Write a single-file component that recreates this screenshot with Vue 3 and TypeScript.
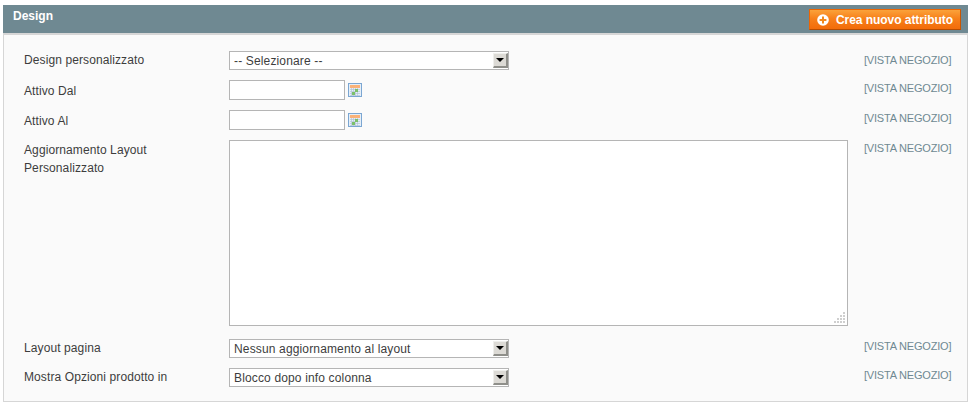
<script setup lang="ts">
interface SelectRow {
  label: string;
  value: string;
}

const customDesign: SelectRow = { label: 'Design personalizzato', value: '-- Selezionare --' };
const dateRows = ['Attivo Dal', 'Attivo Al'];
const bottomRows: SelectRow[] = [
  { label: 'Layout pagina', value: 'Nessun aggiornamento al layout' },
  { label: 'Mostra Opzioni prodotto in', value: 'Blocco dopo info colonna' },
];
const scope = '[VISTA NEGOZIO]';

// dotted grip in the textarea corner: [x, y]
const gripDots = [
  [9, 0], [9, 3], [9, 6], [9, 9],
  [6, 3], [6, 6], [6, 9],
  [3, 6], [3, 9],
  [0, 9],
];
</script>

<template>
  <div class="page">
    <div class="head">
      <h4 class="head-title">Design</h4>
      <button class="add-btn" type="button">
        <svg class="add-icon" width="12" height="12" viewBox="0 0 12 12">
          <circle cx="6" cy="6" r="5.8" fill="#fff" />
          <path d="M6 2.6v6.8M2.6 6h6.8" stroke="#f28a1c" stroke-width="2" />
        </svg>
        <span>Crea nuovo attributo</span>
      </button>
    </div>

    <div class="fieldset">
      <div class="row row-select row-top">
        <label class="label">{{ customDesign.label }}</label>
        <div class="value">
          <div class="select-wrap">
            <select class="select"><option>{{ customDesign.value }}</option></select>
            <span class="select-arrow"><i /></span>
          </div>
        </div>
        <span class="scope">{{ scope }}</span>
      </div>

      <div v-for="name in dateRows" :key="name" class="row row-date">
        <label class="label">{{ name }}</label>
        <div class="value date-value">
          <input class="input" type="text" />
          <svg class="cal" width="14" height="14" viewBox="0 0 14 14">
            <rect x="0.5" y="0.5" width="13" height="13" fill="#e6eff8" stroke="#7ba6d2" />
            <rect x="2" y="2" width="10" height="3" fill="#f9b27a" />
            <path d="M2 6.5h10M2 8.5h10M2 10.5h10M2 12.5h10M3.5 5v8M5.5 5v8M7.5 5v8M9.5 5v8" stroke="#b4c6d8" stroke-width="0.7" />
            <rect x="4" y="9" width="3" height="3" fill="#7cc06a" />
            <rect x="7" y="6" width="3" height="3" fill="#7cc06a" />
          </svg>
        </div>
        <span class="scope">{{ scope }}</span>
      </div>

      <div class="row row-text">
        <label class="label label-wide">Aggiornamento Layout Personalizzato</label>
        <div class="value">
          <div class="area-wrap">
            <textarea class="area"></textarea>
            <svg class="grip" width="11" height="11" viewBox="0 0 11 11">
              <rect v-for="(d, i) in gripDots" :key="i" :x="d[0]" :y="d[1]" width="2" height="2" fill="#cfcfcf" />
            </svg>
          </div>
        </div>
        <span class="scope">{{ scope }}</span>
      </div>

      <div v-for="item in bottomRows" :key="item.label" class="row row-select row-low">
        <label class="label">{{ item.label }}</label>
        <div class="value">
          <div class="select-wrap">
            <select class="select"><option>{{ item.value }}</option></select>
            <span class="select-arrow"><i /></span>
          </div>
        </div>
        <span class="scope">{{ scope }}</span>
      </div>
    </div>
  </div>
</template>

<style scoped>
.page {
  width: 965px;
  margin-left: 3px;
  padding-top: 5px;
  font-family: "Liberation Sans", Arial, sans-serif;
  font-size: 12px;
  color: #3d3d3d;
}

.head {
  display: flex;
  justify-content: space-between;
  height: 28px;
  padding: 4px 7px 0 10px;
  box-sizing: border-box;
  background: #6f8992;
}

.head-title {
  margin: 0;
  font-size: 12px;
  line-height: 15px;
  font-weight: 700;
  color: #fff;
}

.add-btn {
  display: flex;
  align-items: center;
  gap: 7px;
  height: 21px;
  width: 152px;
  padding: 0 0 0 7px;
  box-sizing: border-box;
  border: 1px solid #ed6502;
  border-bottom-color: #b64d02;
  border-right-color: #c85502;
  background: linear-gradient(#fba23a, #f7801a 45%, #f26c0a);
  font-family: inherit;
  font-size: 12px;
  font-weight: 700;
  letter-spacing: -0.05px;
  color: #fff;
  white-space: nowrap;
}

.add-icon {
  flex-shrink: 0;
}

.fieldset {
  height: 369px;
  padding: 16px 15px 0 20px;
  box-sizing: border-box;
  background: #fafafa;
  border: 1px solid #d6d6d6;
  border-top: 2px solid #d6d6d6;
}

.row {
  display: grid;
  grid-template-columns: 205px 635px 1fr;
}

.row-select {
  height: 19px;
  margin-bottom: 10px;
}

.row-date {
  height: 20px;
  margin-bottom: 10px;
}

.row-text {
  height: 186px;
  margin-bottom: 13px;
}

.label {
  line-height: 18px;
  letter-spacing: 0.1px;
}

.row-date .label {
  margin-top: 2px;
}

.label-wide {
  display: block;
  width: 170px;
  margin-top: 1px;
}

.scope {
  font-size: 11px;
  line-height: 16px;
  letter-spacing: -0.2px;
  color: #6f8992;
  white-space: nowrap;
}

.row-top .scope {
  margin-top: 1px;
}

.row-low .scope {
  margin-top: -1px;
}

.select-wrap {
  position: relative;
  width: 280px;
  height: 19px;
}

.select {
  display: block;
  width: 100%;
  height: 100%;
  padding: 0 0 0 4px;
  box-sizing: border-box;
  appearance: none;
  border: 1px solid #b5b5b5;
  border-radius: 0;
  background: #fff;
  font-family: inherit;
  font-size: 12px;
  letter-spacing: 0.15px;
  color: #3d3d3d;
}

.select-arrow {
  position: absolute;
  top: 2px;
  right: 1px;
  width: 15px;
  height: 15px;
  box-sizing: border-box;
  display: flex;
  align-items: center;
  justify-content: center;
  background: #dcdad5;
  border-top: 1px solid #efefec;
  border-left: 1px solid #efefec;
  border-right: 2px solid #8f8f8a;
  border-bottom: 2px solid #8f8f8a;
}

.select-arrow i {
  width: 0;
  height: 0;
  border-left: 4px solid transparent;
  border-right: 4px solid transparent;
  border-top: 4px solid #000;
}

.date-value {
  display: flex;
  align-items: center;
  gap: 3px;
}

.input {
  width: 116px;
  height: 20px;
  padding: 0 4px;
  box-sizing: border-box;
  border: 1px solid #b5b5b5;
  background: #fff;
  outline: none;
}

.cal {
  flex-shrink: 0;
}

.area-wrap {
  position: relative;
  width: 619px;
  height: 186px;
}

.area {
  display: block;
  width: 100%;
  height: 100%;
  padding: 2px;
  box-sizing: border-box;
  border: 1px solid #b5b5b5;
  background: #fff;
  resize: none;
  outline: none;
}

.grip {
  position: absolute;
  right: 3px;
  bottom: 3px;
}
</style>
